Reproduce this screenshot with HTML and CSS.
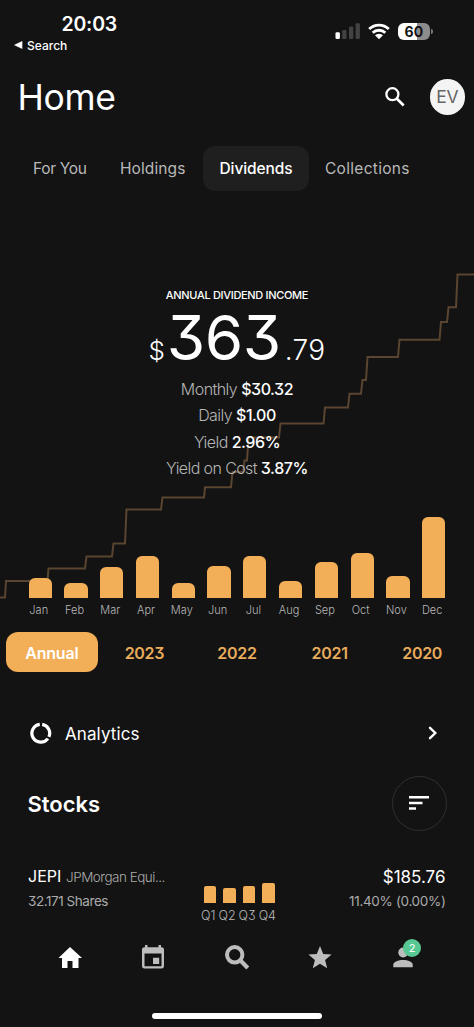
FILE: index.html
```html
<!DOCTYPE html>
<html lang="en">
<head>
<meta charset="utf-8">
<meta name="viewport" content="width=device-width, initial-scale=1">
<title>Home</title>
<link rel="stylesheet" href="styles.css">
</head>
<body>
<div class="app">
  <div class="status">
    <div class="status-left">
      <span class="time">20:03</span>
      <span class="back"><svg width="9" height="8" viewBox="0 0 9 8"><path d="M0 4 8.3 0v8z" fill="#fff"/></svg><span>Search</span></span>
    </div>
    <div class="status-right">
      <svg width="26" height="17" viewBox="0 0 26 17"><g fill="#424242"><rect x="7.2" y="7" width="4.3" height="9" rx="1.2"/><rect x="14" y="3.6" width="4.3" height="12.4" rx="1.2"/><rect x="20.6" y="0.2" width="4.3" height="15.8" rx="1.2"/></g><rect x="0.5" y="9.3" width="4.4" height="6.7" rx="1.2" fill="#fff"/></svg>
      <svg width="22" height="17" viewBox="0 0 22 17"><g fill="none" stroke="#fff" stroke-width="2.8"><path d="M1.2 6.1a14 14 0 0 1 19.6 0"/><path d="M4.7 9.8a9 9 0 0 1 12.6 0"/></g><path d="M7 12.3a5.8 5.8 0 0 1 8 0l-4 4z" fill="#fff"/></svg>
      <span class="battery"><span class="battery-body">60</span><span class="battery-tip"></span></span>
    </div>
  </div>

  <header class="header">
    <h1 class="title">Home</h1>
    <svg class="search" width="20" height="20" viewBox="0 0 20 20" fill="none" stroke="#fff"><circle cx="7.4" cy="7.2" r="6" stroke-width="2.3"/><path d="m11.7 11.5 7 7" stroke-width="2.7"/></svg>
    <span class="avatar">EV</span>
  </header>

  <nav class="tabs">
    <span class="tab t1">For You</span><span class="tab t2">Holdings</span><span class="tab active">Dividends</span><span class="tab t4">Collections</span>
  </nav>

  <section class="hero">
    <svg class="growth" width="474" height="427" viewBox="0 191 474 427"><path d="M0 597.5H5L6 581H47.5L48.5 568.5H85L86.5 556.5H112L113.5 543.5H125L126.5 509.5H161L162.5 497.5H204L205 487.3H231L232.5 472H243L244.500 460.500H247L248.500 437.500H279L280.500 423.500H323.500L325 407.500H348L349.500 393.700H361L362.500 380H366L367.500 357H398L399.500 339.800H439.500L441 322H447L448.500 307.300H456L457.500 274.500H474" fill="none" stroke="#5a4530" stroke-width="2"/></svg>
    <div class="caption">ANNUAL DIVIDEND INCOME</div>
    <div class="amount"><span class="cur">$</span><span class="whole">363</span><span class="cents">.79</span></div>
    <div class="stats">
      <p class="s1">Monthly <b>$30.32</b></p>
      <p class="s2">Daily <b>$1.00</b></p>
      <p class="s3">Yield <b>2.96%</b></p>
      <p class="s4">Yield on Cost <b>3.87%</b></p>
    </div>
    <div class="bars">
      <i style="height:20px"></i><i style="height:15px"></i><i style="height:31px"></i><i style="height:42px"></i><i style="height:15px"></i><i style="height:32px"></i><i style="height:42px"></i><i style="height:17px"></i><i style="height:36px"></i><i style="height:45px"></i><i style="height:22px"></i><i style="height:81px"></i>
    </div>
    <div class="months"><span>Jan</span><span>Feb</span><span>Mar</span><span>Apr</span><span>May</span><span>Jun</span><span>Jul</span><span>Aug</span><span>Sep</span><span>Oct</span><span>Nov</span><span>Dec</span></div>
  </section>

  <div class="years"><span class="selected">Annual</span><span>2023</span><span>2022</span><span>2021</span><span>2020</span></div>

  <div class="analytics">
    <svg width="24" height="24" viewBox="0 0 24 24" fill="none" stroke="#fff" stroke-width="3.2"><path d="M13.200 3.400a8.900 8.900 0 0 1 6.700 12.400M18.900 17.600A8.900 8.900 0 1 1 10.800 3.400"/></svg>
    <span class="analytics-label">Analytics</span>
    <svg width="10" height="14" viewBox="0 0 10 14"><path d="m2 1.800 5.300 5.200L2 12.200" fill="none" stroke="#fff" stroke-width="2.400" stroke-linecap="round"/></svg>
  </div>

  <div class="stocks">
    <h2>Stocks</h2>
    <span class="sort"><svg width="20" height="14" viewBox="0 0 20 14" fill="#fff"><path d="M0 0h20v2.500H0zM0 5.700h13.500v2.500H0zM0 11.200h7v2.500H0z"/></svg></span>
  </div>

  <div class="holding">
    <div class="name">
      <div class="row1"><span class="ticker">JEPI</span><span class="company">JPMorgan Equi...</span></div>
      <div class="shares">32.171 Shares</div>
    </div>
    <div class="quarters">
      <div class="qbars"><i style="height:17px"></i><i style="height:15px"></i><i style="height:17px"></i><i style="height:20px"></i></div>
      <div class="qlabels"><span>Q1</span><span>Q2</span><span>Q3</span><span>Q4</span></div>
    </div>
    <div class="value">
      <div class="price">$185.76</div>
      <div class="pct">11.40% (0.00%)</div>
    </div>
  </div>

  <nav class="bottom">
    <svg viewBox="0 0 28 28"><path d="M11.500 25v-7h5v7h6V15H26L14 4 2.500 15H6v10z" fill="#fff"/></svg>
    <svg viewBox="0 0 28 28"><path fill-rule="evenodd" d="M6 2h2.500v2.300h11V2H22v2.300h.5A2.600 2.600 0 0 1 25 7v16a2.600 2.600 0 0 1-2.500 2.600h-17A2.600 2.600 0 0 1 3 23V7a2.600 2.600 0 0 1 2.500-2.700H6zM5.500 10.500v12.700h17V10.500zM14 14.700h6.200V21H14z" fill="#bdbdbd"/></svg>
    <svg viewBox="0 0 28 28" fill="none" stroke="#bdbdbd"><circle cx="11.700" cy="11.800" r="7.700" stroke-width="4"/><path d="m17.200 17.300 7.600 7.600" stroke-width="4.200"/></svg>
    <svg viewBox="0 0 28 28"><path d="M14 3l3.200 8 8.400.600-6.500 5.400L21.200 25.300 14 20.800 6.800 25.300 8.900 17 2.400 11.600l8.400-.600z" fill="#bdbdbd"/></svg>
    <span class="profile"><svg viewBox="0 0 28 28" fill="#bdbdbd"><circle cx="14.200" cy="9.500" r="4.900"/><path d="M4.300 24.300v-2.800C4.300 18.800 9.500 17 14.100 17s9.600 1.800 9.600 4.500v2.800z"/></svg><span class="badge">2</span></span>
  </nav>
  <div class="home-bar"></div>
</div>
</body>
</html>
```
FILE: styles.css
```css
* { box-sizing: border-box; margin: 0; padding: 0; }
body {
  background: #131313;
  color: #fff;
  font-family: Inter, "Liberation Sans", sans-serif;
  font-feature-settings: "cv09" 1;
}
svg { display: block; flex: none; }
span, p, div { white-space: nowrap; }
.app { width: 474px; height: 1027px; overflow: hidden; display: flex; flex-direction: column; background: #131313; }
.app > * { flex: none; }

.status { height: 66px; display: flex; justify-content: space-between; font-feature-settings: normal; }
.status-left { padding: 12px 0 0 14px; }
.time { display: block; margin-left: 47.500px; font-size: 19.500px; line-height: 24px; font-weight: 600; letter-spacing: -.2px; }
.back { display: flex; align-items: center; gap: 4px; height: 18px; font-size: 12px; font-weight: 500; letter-spacing: 0; }
.status-right { display: flex; gap: 7px; padding: 23px 41px 0 0; height: 41px; }
.battery { display: flex; align-items: center; gap: 1px; height: 17px; margin-left: 1px; }
.battery-body { width: 32px; height: 17px; border-radius: 6px; background: linear-gradient(90deg, #fff 60%, #8c8c8c 60%); color: #131313; font-size: 14px; font-weight: 700; line-height: 17px; text-align: center; letter-spacing: .3px; }
.battery-tip { width: 2px; height: 5px; border-radius: 0 2px 2px 0; background: #777; }

.header { height: 80px; padding: 0 9px 18px 17.500px; display: flex; align-items: center; }
.title { flex: 1; padding-top: 1px; font-size: 35.500px; line-height: 44px; font-weight: 400; letter-spacing: -.3px; }
.search { margin-right: 25px; }
.avatar { width: 35.500px; height: 35.500px; border-radius: 50%; background: #f4f4f4; color: #666; font-size: 17.500px; line-height: 36px; text-align: center; letter-spacing: -.4px; }

.tabs { height: 45px; display: flex; align-items: center; padding-left: 33px; font-size: 15.500px; line-height: 45px; color: #b9b9b9; letter-spacing: .1px; }
.tab { flex: none; height: 45px; }
.t1 { width: 87px; letter-spacing: -.3px; }
.t2 { width: 83px; }
.t4 { letter-spacing: .3px; }
.active { width: 106px; height: 45.500px; line-height: 46px; border-radius: 12px; background: #1f1f1f; color: #fff; font-weight: 500; text-align: center; margin-right: 16px; letter-spacing: -.1px; }

.hero { position: relative; height: 427px; padding-top: 95px; display: flex; flex-direction: column; }
.hero > div { position: relative; }
.growth { position: absolute; left: 0; top: 0; }
.caption { height: 18px; line-height: 18px; font-size: 11px; font-weight: 500; text-align: center; letter-spacing: -.32px; }
.amount { height: 72px; display: flex; justify-content: center; align-items: baseline; line-height: 68px; }
.cur { font-size: 26px; font-weight: 350; margin-right: 2px; }
.whole { font-size: 62px; font-weight: 400; letter-spacing: -.5px; }
.cents { font-size: 28px; font-weight: 350; margin-left: 4px; letter-spacing: .4px; }
.stats { height: 143px; color: #b5b5b5; font-size: 16px; font-weight: 300; text-align: center; line-height: 26.300px; letter-spacing: -.55px; }
.stats b { color: #fff; font-weight: 500; letter-spacing: -.45px; }
.stats .s4 { letter-spacing: -.6px; }
.bars { height: 79px; display: flex; align-items: flex-end; justify-content: space-between; padding: 0 28.500px; }
.bars i { width: 23.300px; border-radius: 6px 6px 0 0; background: #f3ae58; }
.months { height: 20px; display: flex; justify-content: space-between; padding: 3px 26px 0 23px; font-size: 11px; line-height: 19px; font-weight: 300; color: #b8b8b8; }
.months span { width: 31.500px; text-align: center; }

.years { margin-top: 14px; margin-left: 5.500px; width: 463px; height: 40px; display: grid; grid-template-columns: repeat(5, 1fr); grid-template-rows: 40px; line-height: 42px; font-size: 16px; font-weight: 600; text-align: center; color: #e7ab5c; letter-spacing: -.3px; }
.selected { background: #f3ae58; color: #fff; border-radius: 12px; letter-spacing: -.2px; }

.analytics { height: 30px; margin-top: 46px; padding: 0 36px 0 29px; display: flex; align-items: center; }
.analytics-label { flex: 1; margin-left: 12px; padding-top: 1px; font-size: 17px; line-height: 24px; letter-spacing: .1px; }
.stocks { height: 56px; margin-top: 27px; padding: 0 27.500px; display: flex; align-items: center; justify-content: space-between; }
.stocks h2 { padding-top: 2px; font-size: 22px; font-weight: 600; }
.sort { width: 55px; height: 55px; border: 1px solid #303030; border-radius: 50%; display: flex; align-items: center; justify-content: center; }

.holding { height: 66px; margin-top: 32px; padding: 0 28.500px 0 28px; display: flex; }
.name { width: 173px; }
.row1 { display: flex; align-items: baseline; height: 26px; line-height: 26px; }
.ticker { width: 38px; font-size: 16px; }
.company { font-size: 13.500px; color: #aaa; font-weight: 350; letter-spacing: -.5px; }
.shares { line-height: 24px; font-size: 13.500px; color: #aaa; font-weight: 400; letter-spacing: -.45px; }
.quarters { width: 75px; height: 60px; }
.qbars { height: 40px; padding: 0 1px 0 2.500px; display: flex; align-items: flex-end; justify-content: space-between; }
.qbars i { width: 12.500px; border-radius: 2px 2px 0 0; background: #f3ae58; }
.qlabels { display: flex; justify-content: space-between; margin-top: 2px; line-height: 21px; font-size: 12.500px; font-weight: 300; color: #b8b8b8; }
.value { flex: 1; text-align: right; }
.price { line-height: 28px; height: 26px; font-size: 17px; }
.pct { line-height: 24px; font-size: 13.500px; color: #aaa; font-weight: 400; letter-spacing: -.33px; }

.bottom { height: 76px; margin-top: 0; padding: 14px 57px 0 56px; display: flex; justify-content: space-between; }
.bottom svg { width: 28px; height: 28px; }
.profile { position: relative; width: 28px; height: 28px; }
.badge { position: absolute; left: 14px; top: -4px; width: 18px; height: 18px; border-radius: 50%; background: #57c793; color: #fff; font-size: 11px; line-height: 18px; text-align: center; }
.home-bar { width: 170px; height: 6px; margin: 8px 0 0 152px; border-radius: 3px; background: #fff; }
```
